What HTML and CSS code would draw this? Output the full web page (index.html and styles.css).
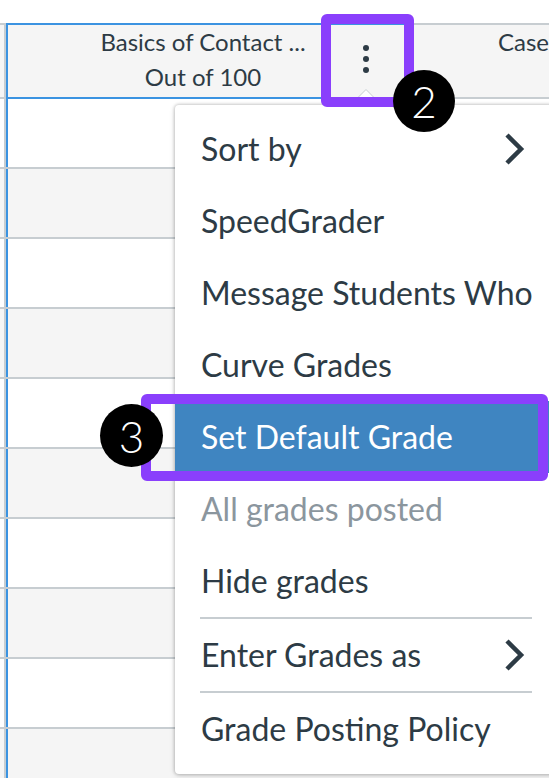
FILE: index.html
```html
<!DOCTYPE html>
<html>
<head>
<meta charset="utf-8">
<link rel="stylesheet" href="styles.css">
</head>
<body>
<div class="page">
  <div class="header">
    <div class="h-gutter"></div>
    <div class="h-sel">
      <div class="h-title"><div class="t1">Basics of Contact ...</div><div class="t2">Out of 100</div></div>
      <div class="kebab"><span class="dot"></span><span class="dot"></span><span class="dot"></span></div>
    </div>
    <div class="h-next"><div class="t1">Case</div></div>
  </div>
  <div class="rows">
    <div class="row"><div class="r-gutter"></div><div class="r-sel"></div></div>
    <div class="row alt"><div class="r-gutter"></div><div class="r-sel"></div></div>
    <div class="row"><div class="r-gutter"></div><div class="r-sel"></div></div>
    <div class="row alt"><div class="r-gutter"></div><div class="r-sel"></div></div>
    <div class="row"><div class="r-gutter"></div><div class="r-sel"></div></div>
    <div class="row alt"><div class="r-gutter"></div><div class="r-sel"></div></div>
    <div class="row"><div class="r-gutter"></div><div class="r-sel"></div></div>
    <div class="row alt"><div class="r-gutter"></div><div class="r-sel"></div></div>
    <div class="row"><div class="r-gutter"></div><div class="r-sel"></div></div>
    <div class="row alt"><div class="r-gutter"></div><div class="r-sel"></div></div>
  </div>

  <svg class="arrow" width="18" height="10" viewBox="0 0 18 10"><polyline points="1,9.5 9,1.5 17,9.5" fill="#ffffff" stroke="#c7cdd1" stroke-width="1"/></svg>

  <div class="menu">
    <div class="item"><span>Sort by</span><svg class="chev" width="22" height="32" viewBox="0 0 22 32"><polyline points="3,2 17,16 3,30" fill="none" stroke="#2d3b45" stroke-width="4.5"/></svg></div>
    <div class="item"><span>SpeedGrader</span></div>
    <div class="item"><span>Message Students Who</span></div>
    <div class="item"><span>Curve Grades</span></div>
    <div class="item active"><span>Set Default Grade</span></div>
    <div class="item disabled"><span>All grades posted</span></div>
    <div class="item"><span>Hide grades</span></div>
    <div class="sep"></div>
    <div class="item"><span>Enter Grades as</span><svg class="chev" width="22" height="32" viewBox="0 0 22 32"><polyline points="3,2 17,16 3,30" fill="none" stroke="#2d3b45" stroke-width="4.5"/></svg></div>
    <div class="sep"></div>
    <div class="item"><span>Grade Posting Policy</span></div>
  </div>

  <div class="hl hl-kebab"></div>
  <div class="hl hl-item"></div>
  <div class="badge badge-2">2</div>
  <div class="badge badge-3">3</div>
</div>
</body>
</html>
```

FILE: styles.css
```css
html, body {
  margin: 0;
  padding: 0;
  background: #ffffff;
}
body {
  font-family: Lato, "Noto Sans", "Liberation Sans", sans-serif;
  color: #2d3b45;
}
.page {
  position: relative;
  width: 549px;
  height: 778px;
  overflow: hidden;
  background: #ffffff;
}
.header {
  margin-top: 23px;
  height: 76px;
  display: flex;
}
.h-gutter {
  width: 6px;
  flex: none;
  box-sizing: border-box;
  background: #f5f5f5;
  border-top: 2px solid #c7cdd1;
  border-bottom: 2px solid #c7cdd1;
  border-right: 2px solid #c7cdd1;
}
.h-sel {
  width: 408px;
  flex: none;
  box-sizing: border-box;
  background: #f5f5f5;
  border: 2px solid #3b93e1;
  border-right: 2px solid #c7cdd1;
  display: flex;
  align-items: center;
}
.h-title {
  width: 286px;
  padding-left: 52px;
  margin-top: -4px;
  text-align: center;
  font-size: 24px;
  line-height: 35px;
  white-space: nowrap;
}
.kebab {
  width: 40px;
  display: flex;
  flex-direction: column;
  align-items: center;
  gap: 5px;
  margin-top: -5px;
}
.dot {
  width: 6px;
  height: 6px;
  border-radius: 50%;
  background: #2d3b45;
}
.h-next {
  flex: 1;
  box-sizing: border-box;
  background: #f5f5f5;
  border-top: 2px solid #c7cdd1;
  border-bottom: 2px solid #c7cdd1;
  padding-left: 84px;
  padding-top: 0;
  margin-top: 0;
  font-size: 24px;
  line-height: 33px;
  white-space: nowrap;
  overflow: hidden;
}
.row {
  height: 70px;
  box-sizing: border-box;
  border-bottom: 2px solid #c7cdd1;
  display: flex;
  background: #ffffff;
}
.row.alt {
  background: #f5f5f5;
}
.r-gutter {
  width: 6px;
  flex: none;
  box-sizing: border-box;
  border-right: 2px solid #c7cdd1;
}
.r-sel {
  flex: 1;
  border-left: 2px solid #3b93e1;
}
.arrow {
  position: absolute;
  left: 357px;
  top: 88px;
}
.menu {
  position: absolute;
  left: 175px;
  top: 105px;
  width: 382px;
  box-sizing: border-box;
  padding: 8px 0 9px;
  background: #ffffff;
  border-radius: 4px;
  box-shadow: 0 0 3px 1px rgba(0, 0, 0, 0.18), 0 2px 6px rgba(0, 0, 0, 0.12);
}
.item {
  height: 72px;
  display: flex;
  align-items: center;
  justify-content: space-between;
  padding: 0 31px 0 26px;
  font-size: 32px;
  line-height: 72px;
  white-space: nowrap;
}
.item.active {
  background: #3f85c1;
  color: #ffffff;
}
.item.disabled {
  color: #8b969e;
}
.chev {
  display: block;
}
.sep {
  height: 2px;
  margin: 0 25px;
  background: #c7cdd1;
}
.hl {
  position: absolute;
  box-sizing: border-box;
  border: 10px solid #8a3ffc;
  border-radius: 6px;
}
.hl-kebab {
  left: 321px;
  top: 14px;
  width: 93px;
  height: 93px;
}
.hl-item {
  left: 141px;
  top: 394px;
  width: 407px;
  height: 87px;
}
.badge {
  position: absolute;
  border-radius: 50%;
  background: #000000;
  color: #ffffff;
  display: flex;
  align-items: center;
  justify-content: center;
  font-size: 44px;
  font-weight: 300;
  line-height: 1;
}
.badge-2 {
  left: 393px;
  top: 70px;
  width: 62px;
  height: 62px;
}
.badge-3 {
  left: 100px;
  top: 404px;
  width: 63px;
  height: 63px;
}
```
